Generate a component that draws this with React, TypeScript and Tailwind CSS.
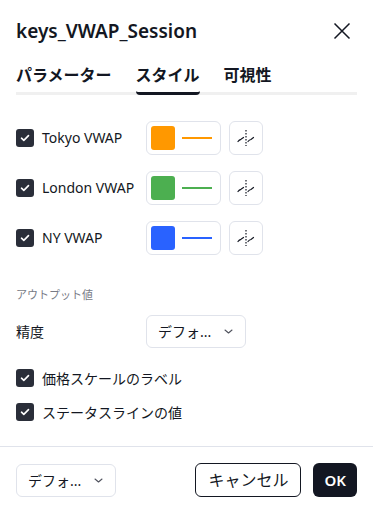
import { useState } from "react";

const font = { fontFamily: '"Noto Sans", "Noto Sans CJK JP", sans-serif' };

function Check() {
  return (
    <span className="flex h-[18px] w-[18px] items-center justify-center rounded-[3px] bg-[#2a2e39]">
      <svg width="12" height="12" viewBox="0 0 12 12" fill="none">
        <path d="M2.5 6.2l2.3 2.2 4.7-4.8" stroke="white" strokeWidth="1.6" strokeLinecap="round" strokeLinejoin="round" />
      </svg>
    </span>
  );
}

function Chevron() {
  return (
    <svg width="9" height="5" viewBox="0 0 9 5" fill="none">
      <path d="M1 1l3.5 3 3.5-3" stroke="#50535e" strokeWidth="1.1" strokeLinecap="round" strokeLinejoin="round" />
    </svg>
  );
}

function Select({ w }: { w: string }) {
  return (
    <div className={`flex h-[33px] ${w} items-center justify-between rounded-md border border-[#e0e3eb] pl-[11px] pr-[12px] text-[14px] text-[#131722]`}>
      <span>デフォ...</span>
      <Chevron />
    </div>
  );
}

const rows = [
  { name: "Tokyo VWAP", color: "#ff9800" },
  { name: "London VWAP", color: "#4caf50" },
  { name: "NY VWAP", color: "#2962ff" },
];

export default function App() {
  const [tab] = useState(1);
  const tabs = ["パラメーター", "スタイル", "可視性"];

  return (
    <div className="h-[510px] w-[373px] bg-white text-[#131722]" style={font}>
      {/* header */}
      <div className="flex items-center justify-between pl-4 pr-[22px] pt-[17px]">
        <h1 className="text-[19px] font-semibold leading-[28px]">keys_VWAP_Session</h1>
        <svg width="18" height="18" viewBox="0 0 18 18" fill="none">
          <path d="M1.5 1.5l15 15M16.5 1.5l-15 15" stroke="#131722" strokeWidth="1.5" />
        </svg>
      </div>

      {/* tabs */}
      <div className="mx-4 mt-[19px] flex border-b-[3px] border-[#f0f0f0] text-[16px] font-semibold">
        {tabs.map((t, i) => (
          <div
            key={t}
            className={`-mb-[3px] mr-[24px] pb-[6px] leading-[22px] ${i === tab ? "border-b-[3px] border-[#131722] rounded-sm" : "border-b-[3px] border-transparent"}`}
          >
            {t}
          </div>
        ))}
      </div>

      {/* style rows */}
      <div className="mt-[26px] flex flex-col gap-4 px-4">
        {rows.map((r) => (
          <div key={r.name} className="flex h-[34px] items-center">
            <Check />
            <span className="ml-2 w-[104px] text-[14px] leading-5">{r.name}</span>
            <div className="flex h-[34px] w-[75px] items-center rounded-md border border-[#e0e3eb] pl-[4px]">
              <span className="h-[24px] w-[24px] rounded-[3px]" style={{ background: r.color }} />
              <span className="ml-[7px] h-[2px] w-[30px]" style={{ background: r.color }} />
            </div>
            <div className="ml-[8px] flex h-[34px] w-[34px] items-center justify-center rounded-md border border-[#e0e3eb]">
              <svg width="22" height="18" viewBox="0 0 22 18" fill="none">
                <path d="M3 12.5c1-1.5 2-2 3-2.2l2.5-1.8M13 12.5c1-1.3 2-1.8 3-2l2.5-2" stroke="#131722" strokeWidth="1.2" strokeLinecap="round" />
                <path d="M11 1v16" stroke="#131722" strokeWidth="1.2" strokeDasharray="1.5 1.5" />
              </svg>
            </div>
          </div>
        ))}
      </div>

      {/* output values */}
      <div className="mt-[32px] px-4 text-[11px] leading-4 text-[#787b86]">アウトプット値</div>

      <div className="mt-[12px] flex items-center px-4">
        <span className="w-[130px] text-[14px]">精度</span>
        <Select w="w-[100px]" />
      </div>

      <div className="mt-[21px] flex flex-col gap-4 px-4">
        {["価格スケールのラベル", "ステータスラインの値"].map((t) => (
          <div key={t} className="flex h-[18px] items-center">
            <Check />
            <span className="ml-2 text-[14px]">{t}</span>
          </div>
        ))}
      </div>

      {/* footer */}
      <div className="mt-[25px] border-t border-[#e0e3eb]" />
      <div className="flex items-center px-4 pt-[16px]">
        <Select w="w-[100px]" />
        <div className="ml-auto flex h-[34px] items-center rounded-md border border-[#131722] px-[12px] text-[16px]">
          キャンセル
        </div>
        <div className="ml-3 flex h-[34px] items-center rounded-md bg-[#131722] px-[11px] text-[15px] font-semibold text-white">
          OK
        </div>
      </div>
    </div>
  );
}
